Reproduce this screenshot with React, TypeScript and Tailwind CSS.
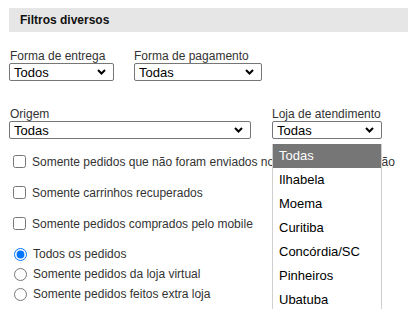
import React from 'react';

const Chevron = () => (
  <svg width="9" height="6" viewBox="0 0 9 6" className="shrink-0">
    <path d="M1 1 L4.5 4.5 L8 1" fill="none" stroke="#000" strokeWidth="2" />
  </svg>
);

const FakeSelect = ({ value, width }: { value: string; width: string }) => (
  <div
    className={`${width} h-[18px] flex items-center justify-between border border-[#767676] rounded-[2px] bg-white pl-[4px] pr-[7px] text-[13px] text-black leading-none`}
  >
    <span>{value}</span>
    <Chevron />
  </div>
);

const lojas = ['Todas', 'Ilhabela', 'Moema', 'Curitiba', 'Concórdia/SC', 'Pinheiros', 'Ubatuba'];

export default function App() {
  return (
    <div
      className="w-[408px] h-[309px] overflow-hidden bg-white pt-2 pl-[9px] text-[#333] text-[12px]"
      style={{ fontFamily: '"Liberation Sans", Arial, sans-serif' }}
    >
      {/* Cabeçalho */}
      <div className="h-6 bg-[#e6e6e6] pl-[11px] flex items-center font-bold text-[12px] text-[#111]">
        Filtros diversos
      </div>

      {/* Forma de entrega / pagamento */}
      <div className="flex gap-[20px] mt-[17px]">
        <div className="flex flex-col">
          <label className="leading-[14px] pl-px">Forma de entrega</label>
          <FakeSelect value="Todos" width="w-[105px]" />
        </div>
        <div className="flex flex-col">
          <label className="leading-[14px]">Forma de pagamento</label>
          <FakeSelect value="Todas" width="w-[128px]" />
        </div>
      </div>

      {/* Origem / Loja */}
      <div className="flex gap-[21px] mt-[26px]">
        <div className="flex flex-col">
          <label className="leading-[14px] pl-px">Origem</label>
          <FakeSelect value="Todas" width="w-[242px]" />
        </div>
        <div className="relative flex flex-col">
          <label className="leading-[14px]">Loja de atendimento</label>
          <FakeSelect value="Todas" width="w-[110px]" />
          {/* lista aberta */}
          <div className="absolute z-10 left-0 top-[calc(100%+5px)] w-[110px] bg-white border-x border-[#cfcfcf] text-[13px] text-black">
            {lojas.map((l, i) => (
              <div
                key={l}
                className={`h-6 flex items-center pl-[6px] ${i === 0 ? 'bg-[#767676] text-white' : ''}`}
              >
                {l}
              </div>
            ))}
          </div>
        </div>
      </div>

      {/* Checkboxes */}
      <div className="flex flex-col gap-[18px] mt-[16px] pl-[4px]">
        {[
          'Somente pedidos que não foram enviados no sistema de integração',
          'Somente carrinhos recuperados',
          'Somente pedidos comprados pelo mobile',
        ].map((t) => (
          <label key={t} className="h-[13px] flex items-center gap-[6px] whitespace-nowrap">
            <input type="checkbox" className="m-0 w-[13px] h-[13px] shrink-0" />
            <span>{t}</span>
          </label>
        ))}
      </div>

      {/* Radios */}
      <div className="flex flex-col mt-[14px] pl-[5px]">
        {['Todos os pedidos', 'Somente pedidos da loja virtual', 'Somente pedidos feitos extra loja'].map(
          (t, i) => (
            <label key={t} className="h-5 flex items-center gap-[6px] whitespace-nowrap">
              <input
                type="radio"
                name="tipo"
                defaultChecked={i === 0}
                className="m-0 w-[13px] h-[13px] shrink-0"
              />
              <span>{t}</span>
            </label>
          )
        )}
      </div>
    </div>
  );
}
